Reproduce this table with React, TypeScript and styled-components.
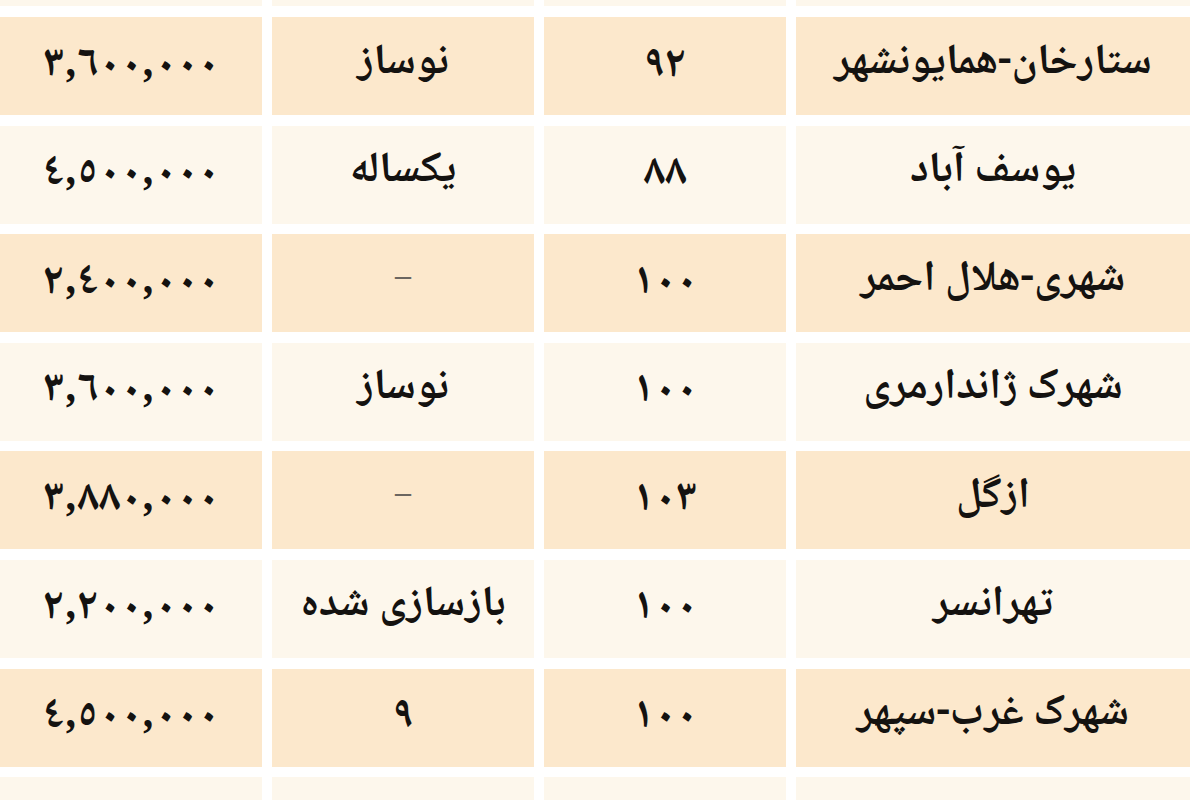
import React from "react";
import styled, { createGlobalStyle } from "styled-components";

const GlobalStyle = createGlobalStyle`
  html, body {
    margin: 0;
    padding: 0;
    background: #ffffff;
  }
  body {
    font-family: "Noto Naskh Arabic", "Noto Sans Arabic", "DejaVu Sans", sans-serif;
  }
`;

const Viewport = styled.div`
  width: 1200px;
  height: 800px;
  overflow: hidden;
  background: #ffffff;
`;

const Table = styled.div`
  direction: rtl;
  display: grid;
  grid-template-columns: 394px 242px 262px 262px;
  grid-auto-rows: 98px;
  column-gap: 10px;
  row-gap: 10.6px;
  padding-right: 10px;
  margin-top: -91.6px;
`;

const Cell = styled.div<{ $shade: boolean }>`
  display: flex;
  align-items: center;
  justify-content: center;
  background: ${(p) => (p.$shade ? "#fce8cc" : "#fdf7ec")};
  color: #141210;
  font-size: 43px;
  font-weight: 700;
  white-space: nowrap;
  padding-bottom: 6px;
  box-sizing: border-box;
`;

const Digits = styled.span`
  direction: ltr;
  unicode-bidi: isolate;
  font-size: 44px;
  letter-spacing: 4px;
  padding-top: 6px;
`;

const Dash = styled.span`
  color: #6b6660;
  font-size: 32px;
  font-weight: 400;
`;

type Row = [string, string, string, string];

const rows: Row[] = [
  ["", "", "", ""],
  ["ستارخان-همایونشهر", "٩٢", "نوساز", "٣,٦٠٠,٠٠٠"],
  ["یوسف آباد", "٨٨", "یکساله", "٤,٥٠٠,٠٠٠"],
  ["شهری-هلال احمر", "١٠٠", "–", "٢,٤٠٠,٠٠٠"],
  ["شهرک ژاندارمری", "١٠٠", "نوساز", "٣,٦٠٠,٠٠٠"],
  ["ازگل", "١٠٣", "–", "٣,٨٨٠,٠٠٠"],
  ["تهرانسر", "١٠٠", "بازسازی شده", "٢,٢٠٠,٠٠٠"],
  ["شهرک غرب-سپهر", "١٠٠", "٩", "٤,٥٠٠,٠٠٠"],
  ["شهرک اکباتان", "٩٠", "نوساز", "٤,٢٠٠,٠٠٠"],
];

const isNumeric = (s: string) => /^[٠-٩,]+$/.test(s);

export default function App() {
  return (
    <>
      <GlobalStyle />
      <Viewport>
        <Table>
          {rows.map((row, r) =>
            row.map((text, c) => (
              <Cell key={`${r}-${c}`} $shade={r % 2 === 1}>
                {text === "–" ? (
                  <Dash>{text}</Dash>
                ) : isNumeric(text) ? (
                  <Digits>{text}</Digits>
                ) : (
                  text
                )}
              </Cell>
            ))
          )}
        </Table>
      </Viewport>
    </>
  );
}
